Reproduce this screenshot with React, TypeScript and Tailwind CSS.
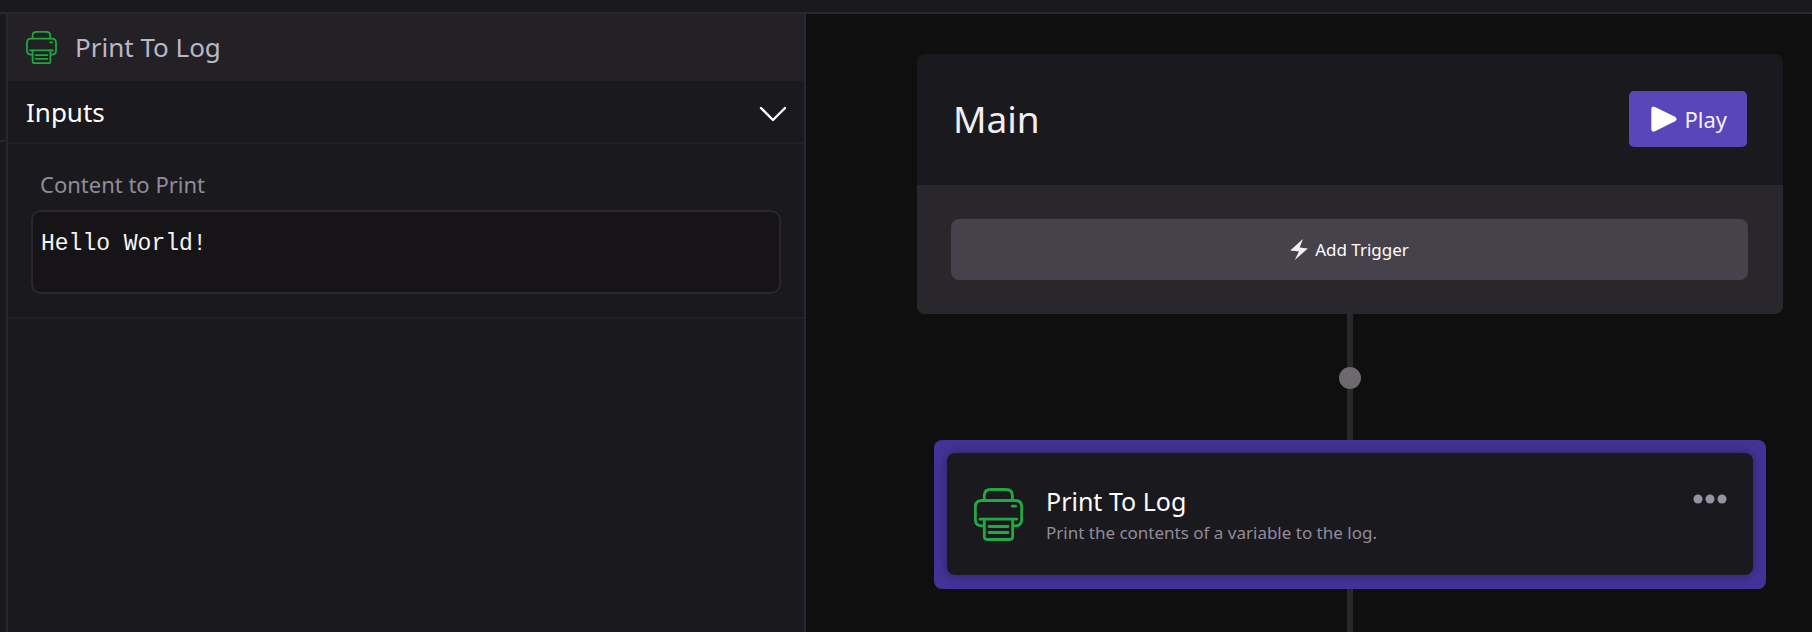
function PrinterIcon({ className }: { className: string }) {
  return (
    <svg
      viewBox="0 0 147 158"
      className={className}
      fill="none"
      stroke="currentColor"
      strokeWidth="8.5"
      strokeLinecap="round"
      strokeLinejoin="round"
      aria-hidden="true"
    >
      <path d="M31 35V22Q31 4 50 4H96Q115 4 115 22V35" />
      <path d="M29 113H24Q4 113 4 93V57Q4 37 24 37H123Q143 37 143 57V93Q143 113 123 113H118" />
      <path d="M18 93H128" />
      <path d="M31 93V146Q31 154 39 154H108Q116 154 116 146V93" />
      <path d="M45 115H102M45 133H102" />
      <path d="M115 54H125" />
    </svg>
  );
}

function SidePanel() {
  return (
    <aside className="flex min-w-0 flex-col border-r-2 border-[#29272d] bg-[#1a191d]">
      <header className="flex h-[67px] items-center gap-[18px] bg-[#232125] px-[18px]">
        <PrinterIcon className="h-[33px] w-[31px] shrink-0 text-[#20a53f]" />
        <h2 className="pb-0.5 text-[26px] leading-8 text-[#bbb7c5]">Print To Log</h2>
      </header>
      <section>
        <button
          type="button"
          className="flex h-[63px] w-full items-center justify-between border-b-2 border-[#222025] px-[18px] text-left text-white"
        >
          <span className="text-[26px] leading-8">Inputs</span>
          <svg viewBox="0 0 27 16" className="mt-1 h-4 w-[27px]" fill="none" stroke="currentColor" strokeWidth="2.4" strokeLinecap="round" strokeLinejoin="round" aria-hidden="true">
            <path d="M2 2L14 14L26 2" />
          </svg>
        </button>
        <div className="flex flex-col gap-[11px] border-b-2 border-[#222025] px-[23px] pt-[25px] pb-[23px]">
          <label htmlFor="content" className="pl-[9px] text-[22px] leading-[30px] text-[#918c9b]">
            Content to Print
          </label>
          <textarea
            id="content"
            defaultValue="Hello World!"
            className="block h-[84px] w-full resize-none rounded-[10px] border-2 border-[#29272d] bg-[#161417] px-2 py-4 font-['Liberation_Mono',monospace] text-[23px] leading-8 text-[#f5f5f5] outline-none"
          />
        </div>
      </section>
    </aside>
  );
}

function MainCard() {
  return (
    <section className="w-full overflow-hidden rounded-lg bg-[#1a191d]">
      <div className="flex h-[131px] items-center justify-between pr-9 pb-0.5 pl-9">
        <h1 className="text-[37px] leading-[48px] text-[#f1eff5]">Main</h1>
        <button type="button" className="flex h-14 items-center gap-[7px] rounded-[5px] bg-[#5946bb] pr-5 pl-[22px] text-[22px] leading-7 text-[#f3f1fb]">
          <svg viewBox="0 0 78 78" className="size-[26px]" fill="#fff" aria-hidden="true">
            <path d="M1 9Q1 -2 12 3L72 32Q82 39 72 46L12 76Q1 81 1 69Z" />
          </svg>
          Play
        </button>
      </div>
      <div className="bg-[#29262c] p-[34px] pr-[35px]">
        <button type="button" className="flex h-[61px] w-full items-center justify-center gap-[7px] rounded-lg bg-[#46424c] text-[17px] leading-6 text-white">
          <svg viewBox="0 0 54 64" className="h-[21px] w-[18px]" fill="#f2f0f4" aria-hidden="true">
            <path d="M39 0L0 35L27 38L14 64L54 29L29 26Z" />
          </svg>
          Add Trigger
        </button>
      </div>
    </section>
  );
}

function StepCard() {
  return (
    <div className="w-full px-[17px]">
      <article className="rounded-lg bg-[#443397] p-[13px] pb-[14px]">
        <div className="flex h-[122px] items-center gap-[23px] rounded-lg bg-[#1a191d] pr-[22px] pl-[27px] shadow-[0_0_12px_rgba(0,0,0,0.35)]">
          <PrinterIcon className="h-[53px] w-[49px] shrink-0 text-[#22a843]" />
          <div className="min-w-0 flex-1 pt-0.5">
            <h3 className="text-[25px] leading-9 text-white">Print To Log</h3>
            <p className="text-[17px] leading-7 text-[#918c9b]">Print the contents of a variable to the log.</p>
          </div>
          <button type="button" aria-label="Step options" className="mt-[37px] self-start p-1 text-[#9791a3]">
            <svg viewBox="0 0 34 10" className="h-[10px] w-[34px]" fill="currentColor" aria-hidden="true">
              <circle cx="5" cy="5" r="4.5" />
              <circle cx="17" cy="5" r="4.5" />
              <circle cx="29" cy="5" r="4.5" />
            </svg>
          </button>
        </div>
      </article>
    </div>
  );
}

export default function App() {
  return (
    <div className="flex min-h-screen flex-col bg-[#1a191d] font-['Noto_Sans',sans-serif]">
      <div className="h-[14px] border-b-2 border-[#29272d]" />
      <div className="grid flex-1 grid-cols-[8px_minmax(0,399fr)_minmax(0,503fr)]">
        <div className="border-r-2 border-[#29272d]">
          <div className="h-32 border-b-2 border-[#29272d]" />
        </div>
        <SidePanel />
        <main className="flex min-w-0 flex-col items-center bg-[#0f0f10] pt-10 pr-[29px] pl-[111px]">
          <MainCard />
          <div className="h-[53px] w-[6px] bg-[#29262c]" />
          <button type="button" aria-label="Add step" className="size-[22px] rounded-full bg-[#6c6a6d]" />
          <div className="h-[51px] w-[6px] bg-[#29262c]" />
          <StepCard />
          <div className="w-[6px] flex-1 bg-[#29262c]" />
        </main>
      </div>
    </div>
  );
}
